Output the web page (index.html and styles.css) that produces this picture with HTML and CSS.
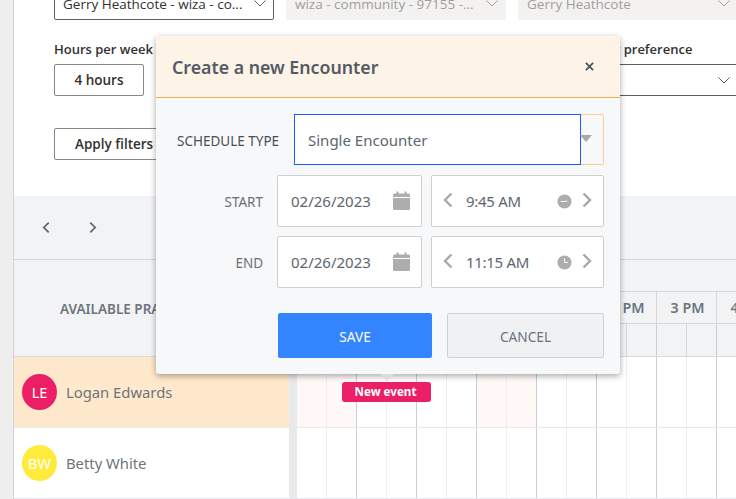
FILE: index.html
```html
<!DOCTYPE html>
<html>
<head>
    <title>Create a new Encounter</title>
    <link rel="stylesheet" href="styles.css">
</head>
<body>
    <div class="page">
        <div class="main">
            <div class="filters">
                <div class="filter-row">
                    <div class="select">
                        <span>Gerry Heathcote - wiza - co...</span>
                        <svg class="chev" viewBox="0 0 12 7"><path d="M.5.5 6 6l5.500-5.500"/></svg>
                    </div>
                    <div class="select disabled">
                        <span>wiza - community - 97155 -...</span>
                        <svg class="chev" viewBox="0 0 12 7"><path d="M.5.5 6 6l5.500-5.500"/></svg>
                    </div>
                    <div class="select disabled">
                        <span>Gerry Heathcote</span>
                        <svg class="chev" viewBox="0 0 12 7"><path d="M.5.5 6 6l5.500-5.500"/></svg>
                    </div>
                </div>
                <div class="filter-row filter-row-second">
                    <div class="field-hours">
                        <label class="field-label">Hours per week</label>
                        <button class="plain-btn hours-btn">4 hours</button>
                    </div>
                    <div class="field-pref">
                        <label class="field-label pref-label">Provider preference</label>
                        <div class="select select-pref">
                            <span></span>
                            <svg class="chev" viewBox="0 0 12 7"><path d="M.5.5 6 6l5.500-5.500"/></svg>
                        </div>
                    </div>
                </div>
                <button class="plain-btn apply-btn">Apply filters</button>
            </div>

            <div class="toolbar">
                <svg class="nav-arrow" viewBox="0 0 8 12"><path d="M6.500 1.500 2 6l4.500 4.500"/></svg>
                <svg class="nav-arrow" viewBox="0 0 8 12"><path d="M1.500 1.500 6 6l-4.500 4.500"/></svg>
            </div>

            <div class="sched-head">
                <div class="head-left">AVAILABLE PRACTITIONERS</div>
                <div class="gutter"></div>
                <div class="head-right">
                    <div class="hours">
                        <div class="hour">10 AM</div>
                        <div class="hour">11 AM</div>
                        <div class="hour">12 PM</div>
                        <div class="hour">1 PM</div>
                        <div class="hour">2 PM</div>
                        <div class="hour">3 PM</div>
                        <div class="hour">4 PM</div>
                    </div>
                    <div class="cells sub-cells">
                        <div class="cell"></div><div class="cell dark"></div>
                        <div class="cell"></div><div class="cell dark"></div>
                        <div class="cell"></div><div class="cell dark"></div>
                        <div class="cell"></div><div class="cell dark"></div>
                        <div class="cell"></div><div class="cell dark"></div>
                        <div class="cell"></div><div class="cell dark"></div>
                        <div class="cell"></div><div class="cell dark"></div>
                        <div class="cell"></div>
                    </div>
                </div>
            </div>

            <div class="row">
                <div class="person person-active">
                    <div class="avatar avatar-pink">LE</div>
                    <span>Logan Edwards</span>
                </div>
                <div class="gutter"></div>
                <div class="cells">
                    <div class="cell pink"></div><div class="cell dark pink"></div>
                    <div class="cell"></div><div class="cell dark"></div>
                    <div class="cell"></div><div class="cell dark"></div>
                    <div class="cell pink"></div><div class="cell dark pink"></div>
                    <div class="cell"></div><div class="cell dark"></div>
                    <div class="cell"></div><div class="cell dark"></div>
                    <div class="cell"></div><div class="cell dark"></div>
                    <div class="cell"></div>
                    <div class="event-badge">New event</div>
                </div>
            </div>
            <div class="row">
                <div class="person">
                    <div class="avatar avatar-yellow">BW</div>
                    <span>Betty White</span>
                </div>
                <div class="gutter"></div>
                <div class="cells">
                    <div class="cell"></div><div class="cell dark"></div>
                    <div class="cell"></div><div class="cell dark"></div>
                    <div class="cell"></div><div class="cell dark"></div>
                    <div class="cell"></div><div class="cell dark"></div>
                    <div class="cell"></div><div class="cell dark"></div>
                    <div class="cell"></div><div class="cell dark"></div>
                    <div class="cell"></div><div class="cell dark"></div>
                    <div class="cell"></div>
                </div>
            </div>
        </div>
    </div>

    <div class="modal">
        <div class="modal-header">
            <h2>Create a new Encounter</h2>
            <svg class="close" viewBox="0 0 10 10"><path d="M1 1l8 8M9 1l-8 8"/></svg>
        </div>
        <div class="modal-body">
            <div class="type-row">
                <label class="type-label">SCHEDULE TYPE</label>
                <div class="type-select">
                    <div class="type-input">Single Encounter</div>
                    <div class="type-caret"><div class="caret"></div></div>
                </div>
            </div>
            <div class="time-row">
                <label class="time-label">START</label>
                <div class="box date-box">
                    <span>02/26/2023</span>
                    <svg class="cal" viewBox="0 0 17 19"><path d="M1.500 2.500h2V.5h2v2h6V.5h2v2h2A1.500 1.500 0 0 1 17 4v2H0V4a1.500 1.500 0 0 1 1.500-1.500zM0 7h17v10.500a1.500 1.500 0 0 1-1.500 1.500h-14A1.500 1.500 0 0 1 0 17.500z"/></svg>
                </div>
                <div class="box time-box">
                    <svg class="arrow" viewBox="0 0 10 16"><path d="M8.500 1.500 2 8l6.500 6.500"/></svg>
                    <span class="time-text">9:45 AM</span>
                    <svg class="clock" viewBox="0 0 16 16"><circle cx="8" cy="8" r="7.500"/><path d="M8 8H4M8 8l3-.6"/></svg>
                    <svg class="arrow" viewBox="0 0 10 16"><path d="M1.500 1.500 8 8l-6.500 6.500"/></svg>
                </div>
            </div>
            <div class="time-row">
                <label class="time-label">END</label>
                <div class="box date-box">
                    <span>02/26/2023</span>
                    <svg class="cal" viewBox="0 0 17 19"><path d="M1.500 2.500h2V.5h2v2h6V.5h2v2h2A1.500 1.500 0 0 1 17 4v2H0V4a1.500 1.500 0 0 1 1.500-1.500zM0 7h17v10.500a1.500 1.500 0 0 1-1.500 1.500h-14A1.500 1.500 0 0 1 0 17.500z"/></svg>
                </div>
                <div class="box time-box">
                    <svg class="arrow" viewBox="0 0 10 16"><path d="M8.500 1.500 2 8l6.500 6.500"/></svg>
                    <span class="time-text">11:15 AM</span>
                    <svg class="clock" viewBox="0 0 16 16"><circle cx="8" cy="8" r="7.500"/><path d="M8 8V3.500M8 8h3.500"/></svg>
                    <svg class="arrow" viewBox="0 0 10 16"><path d="M1.500 1.500 8 8l-6.500 6.500"/></svg>
                </div>
            </div>
            <div class="actions">
                <button class="save-btn">SAVE</button>
                <button class="cancel-btn">CANCEL</button>
            </div>
        </div>
    </div>
    <div class="pointer"></div>
</body>
</html>
```

FILE: styles.css
```css
html, body {
    margin: 0;
    height: 100%;
    overflow: hidden;
}
body {
    font-family: "Noto Sans", "Open Sans", sans-serif;
    background-color: #fff;
    color: #323130;
}
.page {
    display: flex;
    height: 499px;
    background-color: #eee;
    padding-left: 13px;
}
.main {
    flex: 1;
    min-width: 0;
    background-color: #fff;
    border-left: 1px solid #d4d4d4;
}

/* filters */
.filters {
    display: flow-root;
    height: 196px;
    padding-left: 40px;
    font-family: "Open Sans", sans-serif;
    font-size: 13.500px;
}
.filter-row {
    display: flex;
    gap: 12px;
    margin-top: -13px;
}
.filter-row-second {
    margin-top: 20px;
    gap: 0;
}
.select {
    flex: none;
    display: flex;
    align-items: center;
    justify-content: space-between;
    box-sizing: border-box;
    width: 220px;
    height: 33px;
    padding: 0 7px 0 8px;
    border: 1px solid #605e5c;
    border-radius: 2px;
    white-space: nowrap;
    background-color: #fff;
}
.disabled {
    background-color: #f3f2f1;
    border-color: #f3f2f1;
    color: #a19f9d;
}
.chev {
    width: 12px;
    height: 7px;
    fill: none;
    stroke: #605e5c;
}
.disabled .chev { stroke: #a19f9d; }
.field-label {
    display: block;
    font-weight: 600;
    font-size: 13px;
    line-height: 18px;
    margin-bottom: 6px;
    white-space: nowrap;
}
.plain-btn {
    display: block;
    box-sizing: border-box;
    height: 32px;
    padding: 0 20px;
    background-color: #fff;
    border: 1px solid #8a8886;
    border-radius: 2px;
    font-family: inherit;
    font-size: 13.500px;
    font-weight: 600;
    color: #323130;
}
.field-hours { width: 464px; flex: none; }
.hours-btn {
    width: 90px;
    padding: 0;
}
.apply-btn { margin-top: 32px; }
.field-pref { width: 220px; flex: none; }
.pref-label { padding-left: 49px; }
.select-pref { height: 32px; }

/* toolbar + schedule */
.toolbar {
    display: flex;
    align-items: center;
    gap: 37px;
    box-sizing: border-box;
    height: 64px;
    padding-left: 27px;
    background-color: #f2f3f5;
    border-bottom: 1px solid #d4d6d9;
}
.nav-arrow {
    width: 10px;
    height: 13px;
    fill: none;
    stroke: #5a6572;
    stroke-width: 1.600;
}
.sched-head {
    display: flex;
    height: 97px;
    background-color: #f2f3f5;
    border-bottom: 1px solid #d8dadd;
    box-sizing: border-box;
}
.head-left {
    width: 275px;
    box-sizing: border-box;
    padding: 40px 0 0 46px;
    font-size: 13.500px;
    font-weight: 600;
    color: #6c757d;
    white-space: nowrap;
    overflow: hidden;
}
.gutter {
    width: 8px;
    flex: none;
    background-color: #e8e9eb;
}
.sched-head .gutter { background-color: #f2f3f5; }
.head-right {
    flex: 1;
    min-width: 0;
    overflow: hidden;
}
.hours {
    display: flex;
    height: 33px;
    margin-top: 31px;
    box-sizing: border-box;
    padding-left: 59px;
    border-top: 1px solid #d4d6d9;
    border-bottom: 1px solid #d4d6d9;
}
.hour {
    flex: none;
    display: flex;
    align-items: center;
    justify-content: center;
    width: 60px;
    box-sizing: border-box;
    padding-left: 2px;
    font-size: 14.300px;
    font-weight: 600;
    color: #6c757d;
    border-left: 1px solid #d4d6d9;
    white-space: nowrap;
}
.cells {
    position: relative;
    display: flex;
    flex: 1;
    min-width: 0;
    overflow: hidden;
}
.sub-cells { height: 32px; }
.cell {
    flex: none;
    width: 30px;
    box-sizing: border-box;
    border-right: 1px solid #eee;
}
.sub-cells .cell { border-right-color: #d4d6d9; }
.cell.dark { border-right-color: #ccced1; }
.cell.pink { background-color: #fff8f7; }
.row {
    display: flex;
    height: 71px;
    box-sizing: border-box;
    border-bottom: 1px solid #e8e9eb;
}
.person {
    display: flex;
    align-items: center;
    gap: 9px;
    width: 275px;
    box-sizing: border-box;
    padding-left: 8px;
    font-size: 14.800px;
    color: #6c757d;
    background-color: #fff;
}
.person-active { background-color: #ffe9cc; }
.avatar {
    display: flex;
    align-items: center;
    justify-content: center;
    width: 35px;
    height: 36px;
    border-radius: 50%;
    color: #fff;
    font-size: 14.500px;
}
.avatar-pink { background-color: #ec1f66; }
.avatar-yellow { background-color: #ffeb3b; }
.event-badge {
    position: absolute;
    left: 45px;
    top: 25px;
    width: 89px;
    height: 20px;
    box-sizing: border-box;
    padding-right: 2px;
    line-height: 20px;
    text-align: center;
    font-size: 11.600px;
    font-weight: 700;
    color: #fff;
    background-color: #ec1f66;
    border-radius: 3px;
}

/* modal */
.modal {
    position: absolute;
    left: 156px;
    top: 36px;
    width: 464px;
    height: 338px;
    background-color: #f7f8fa;
    border-radius: 3px;
    box-shadow: 0 2px 6px rgba(0, 0, 0, 0.35);
    overflow: hidden;
}
.modal-header {
    display: flex;
    align-items: center;
    justify-content: space-between;
    box-sizing: border-box;
    height: 62px;
    padding: 0 26px 0 16px;
    background-color: #fdf3e6;
    border-bottom: 1px solid #f0ad4e;
}
.modal-header h2 {
    margin: 0;
    font-size: 17.750px;
    font-weight: 600;
    color: #545b64;
}
.close {
    width: 9px;
    height: 9px;
    fill: none;
    stroke: #4a5460;
    stroke-width: 2;
}
.modal-body {
    padding-top: 16px;
    font-size: 15px;
    color: #5c6670;
}
.type-row {
    display: flex;
    align-items: center;
    height: 52px;
    padding-left: 21px;
    margin-bottom: 9px;
}
.type-label {
    width: 117px;
    padding-top: 2px;
    font-size: 13.500px;
    color: #4a4f55;
    white-space: nowrap;
}
.type-select {
    display: flex;
    height: 52px;
}
.type-input {
    box-sizing: border-box;
    width: 287px;
    height: 51px;
    line-height: 50px;
    padding-left: 13px;
    background-color: #fff;
    border: 1px solid #1a5cff;
}
.type-caret {
    box-sizing: border-box;
    width: 23px;
    height: 51px;
    border: 1px solid #ffcf87;
    border-left: none;
    border-radius: 0 2px 2px 0;
    display: flex;
    align-items: center;
}
.caret {
    width: 0;
    height: 0;
    margin: -2px 0 0 -1px;
    border-left: 6px solid transparent;
    border-right: 6px solid transparent;
    border-top: 7px solid #a9a9a9;
}
.time-row {
    display: flex;
    align-items: center;
    margin-bottom: 9px;
}
.time-label {
    box-sizing: border-box;
    width: 107px;
    padding-top: 2px;
    text-align: right;
    font-size: 13.500px;
    color: #6c6f73;
}
.box {
    display: flex;
    align-items: center;
    box-sizing: border-box;
    height: 52px;
    background-color: #fff;
    border: 1px solid #cfcfcf;
    border-radius: 2px;
}
.date-box {
    width: 145px;
    padding: 0 11px 0 13px;
    justify-content: space-between;
    margin-left: 14px;
}
.cal {
    width: 17px;
    height: 19px;
    fill: #adadad;
    margin-top: -2px;
}
.time-box {
    width: 173px;
    margin-left: 9px;
    padding: 0 11px;
}
.arrow {
    width: 10px;
    height: 16px;
    fill: none;
    stroke: #a9a9a9;
    stroke-width: 2.400;
    margin-top: -2px;
}
.time-text {
    flex: 1;
    padding-left: 13px;
    letter-spacing: -0.3px;
}
.clock {
    width: 15px;
    height: 15px;
    margin-right: 10px;
    fill: #adadad;
    stroke: #fff;
    stroke-width: 1;
}
.clock circle { stroke: none; }
.actions {
    display: flex;
    margin: 25px 0 0 122px;
    gap: 15px;
}
.save-btn, .cancel-btn {
    height: 45px;
    padding: 1px 0 0;
    font-family: inherit;
    font-size: 13.700px;
    border-radius: 2px;
}
.save-btn {
    width: 154px;
    color: #fff;
    background-color: #3385ff;
    border: none;
}
.cancel-btn {
    width: 157px;
    color: #6c757d;
    background-color: #f0f1f3;
    border: 1px solid #cfcfcf;
}
.pointer {
    position: absolute;
    left: 380px;
    top: 374px;
    width: 0;
    height: 0;
    border-left: 7px solid transparent;
    border-right: 7px solid transparent;
    border-top: 7px solid #dcdcdc;
}
```
